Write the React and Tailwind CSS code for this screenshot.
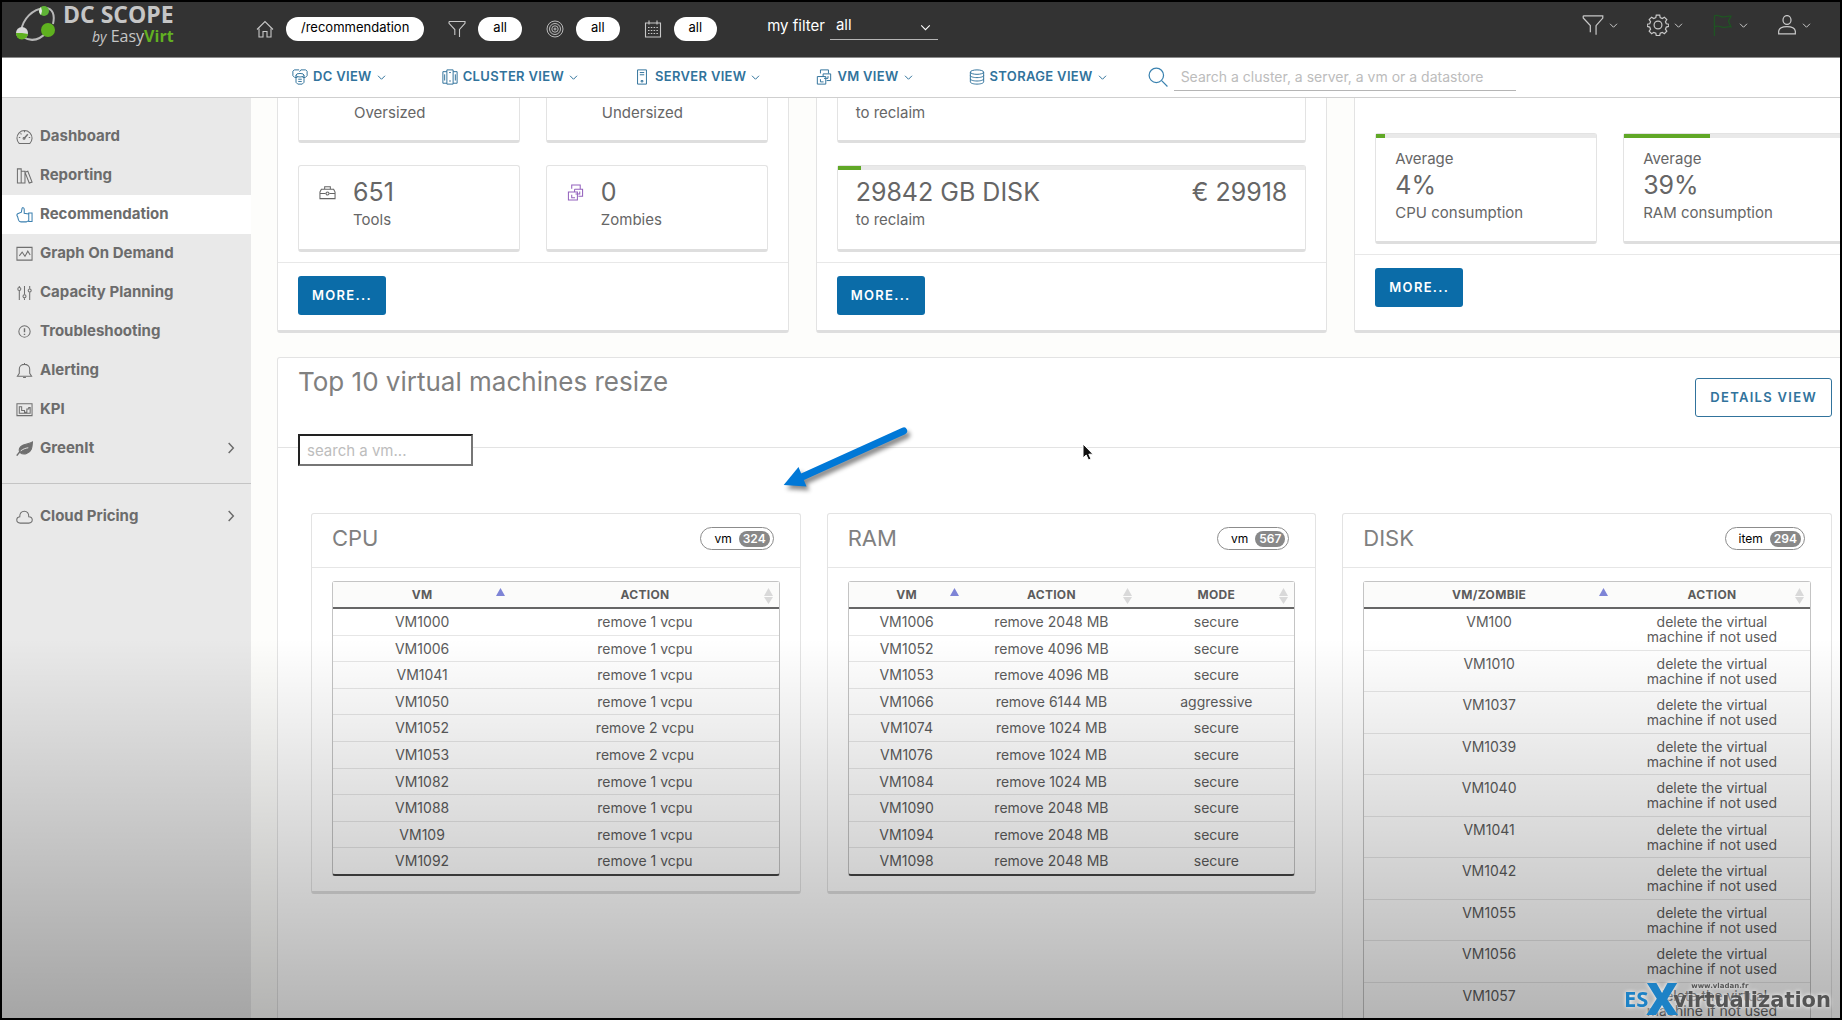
import { useState } from 'react';

const NAV_ITEMS = [
  { label: 'Dashboard', icon: 'gauge' },
  { label: 'Reporting', icon: 'books' },
  { label: 'Recommendation', icon: 'thumb' },
  { label: 'Graph On Demand', icon: 'graph' },
  { label: 'Capacity Planning', icon: 'sliders' },
  { label: 'Troubleshooting', icon: 'alert' },
  { label: 'Alerting', icon: 'bell' },
  { label: 'KPI', icon: 'kpi' },
  { label: 'GreenIt', icon: 'leaf', expandable: true },
];

const VIEWS = [
  { label: 'DC VIEW', icon: 'dc' },
  { label: 'CLUSTER VIEW', icon: 'cluster' },
  { label: 'SERVER VIEW', icon: 'server' },
  { label: 'VM VIEW', icon: 'vm' },
  { label: 'STORAGE VIEW', icon: 'storage' },
];

const CPU_ROWS = [
  ['VM1000', 'remove 1 vcpu'],
  ['VM1006', 'remove 1 vcpu'],
  ['VM1041', 'remove 1 vcpu'],
  ['VM1050', 'remove 1 vcpu'],
  ['VM1052', 'remove 2 vcpu'],
  ['VM1053', 'remove 2 vcpu'],
  ['VM1082', 'remove 1 vcpu'],
  ['VM1088', 'remove 1 vcpu'],
  ['VM109', 'remove 1 vcpu'],
  ['VM1092', 'remove 1 vcpu'],
];

const RAM_ROWS = [
  ['VM1006', 'remove 2048 MB', 'secure'],
  ['VM1052', 'remove 4096 MB', 'secure'],
  ['VM1053', 'remove 4096 MB', 'secure'],
  ['VM1066', 'remove 6144 MB', 'aggressive'],
  ['VM1074', 'remove 1024 MB', 'secure'],
  ['VM1076', 'remove 1024 MB', 'secure'],
  ['VM1084', 'remove 1024 MB', 'secure'],
  ['VM1090', 'remove 2048 MB', 'secure'],
  ['VM1094', 'remove 2048 MB', 'secure'],
  ['VM1098', 'remove 2048 MB', 'secure'],
];

const DISK_ROWS = [
  'VM100', 'VM1010', 'VM1037', 'VM1039', 'VM1040',
  'VM1041', 'VM1042', 'VM1055', 'VM1056', 'VM1057',
].map((vm) => [vm, 'delete the virtual machine if not used']);

// all icons live on an 18x18 grid
const ICONS = {
  home: (
    <>
      <path d="M1 9.5 9 1.5l8 8" />
      <path d="M3 8.5v8.5h4v-5.5h4V17h4V8.5" />
    </>
  ),
  filter: <path d="M1 1.5h16v1.8L11.5 9.5V17M6.8 15V9.5L1 3.3V1.5" />,
  target: (
    <>
      <circle cx="9" cy="9" r="8" />
      <circle cx="9" cy="9" r="5.5" />
      <circle cx="9" cy="9" r="3.2" />
      <circle cx="9" cy="9" r="1" />
    </>
  ),
  calendar: (
    <>
      <path d="M1.5 3h15v14h-15zM5 .5v4M13 .5v4" />
      <path d="M4 7.5h10M4 10.5h10M4 13.5h10" strokeDasharray="1.5 1.3" />
    </>
  ),
  gear: (
    <>
      <circle cx="9" cy="9" r="3.2" />
      <path d="M7.6 1h2.8l.4 2 1.7.7 1.7-1.1 2 2-1.1 1.7.7 1.7 2 .4v1.8l-2 .5-.7 1.7 1.1 1.7-2 2-1.7-1.1-1.7.7-.4 2H7.6l-.4-2-1.7-.7-1.7 1.1-2-2 1.1-1.7-.7-1.7-2-.5V8.400l2-.4.7-1.700-1.100-1.700 2-2 1.700 1.100 1.700-.7z" />
    </>
  ),
  flag: <path d="M2 18V1.5c3-1.5 5 1.5 8 .8 2-.4 3.5-.8 5.500-.5L13.500 6l2 4.500c-3-.6-4 .8-6.500.4C6.500 10.500 5 9 2 10.500" />,
  user: (
    <>
      <ellipse cx="9" cy="4.5" rx="3.6" ry="4" />
      <path d="M1.5 17v-2.5C2 11.5 6 10.5 9 10.5s7 1 7.5 4V17z" />
    </>
  ),
  search: <path d="M12.5 12.5 17.5 17.5M14 7.5a6.500 6.500 0 1 1-13 0 6.500 6.500 0 0 1 13 0z" />,
  gauge: (
    <>
      <path d="M3.5 16.5A8 8 0 1 1 14.5 16.5zM9 3v1.5M3 10h1.5M13.5 10H15M4.8 5.8l1 1" />
      <path d="M12.5 6.5 8.5 11" strokeWidth="1.6" />
      <circle cx="8.5" cy="11" r="1" />
    </>
  ),
  books: <path d="M1.5 2h4v15h-4zM5.5 4.5h4V17h-4M9.5 5.5l3-1L17 16l-3 1zM9.5 5.5v11.5" />,
  thumb: (
    <path d="M13.5 7.5h3.500v9h-3.500zM13.500 8.500 8.700 7.700V3.500C8.700 1.500 6.500 1 6.300 3L5.700 6.500 1.800 8.200C.4 9 1 10.500 1.600 11L2.700 15c.4 1.200 1.300 1.800 2.500 1.800h5.600l2.700-1.300" />
  ),
  graph: <path d="M1 2.5h16v13.500H1zM3.500 11.500l3-4 3 4.500 3-5.500 2.500 4" />,
  sliders: (
    <>
      <path d="M3.5 2v1.5M3.5 7v10M9 2v9M9 15v2M14.5 2v3M14.5 9v8" />
      <circle cx="3.5" cy="5.2" r="1.6" />
      <circle cx="9" cy="13" r="1.6" />
      <circle cx="14.5" cy="7" r="1.6" />
    </>
  ),
  alert: (
    <>
      <circle cx="9" cy="9" r="6" />
      <path d="M9 5.5v4.3M9 11.3v1.3" strokeWidth="1.5" />
    </>
  ),
  bell: <path d="M1.5 15h15l-2-3V7.5C14.5 4.5 12 2.5 9 2.5S3.5 4.5 3.5 7.5V12zM9 1v1.5M7.5 16.5h3" />,
  kpi: <path d="M1 3h16v12.5H1zM3.5 13V6h2.500v4h3v2h2.500V8.500h2V7H15v6z" />,
  leaf: (
    <>
      <path d="M17.5 2C13 5 8 3.5 4.8 7.2 3 9.3 3.3 11.8 4.3 13.3 8.5 16.5 14.5 14 16.3 9.5c1-2.5.8-5.5 1.2-7.5z" fill="currentColor" />
      <path d="M.8 16.5C3 13 6.5 10 12.5 8.8" strokeWidth="1.5" />
      <path d="M5 11.5C7.5 9.5 10 8.7 13 8.2" stroke="#e9e9e9" strokeWidth="1" />
    </>
  ),
  cloud: <path d="M4.5 16C2 16 .8 14.3.8 12.5S2.5 9.5 4 9.3C3.8 5.500 6 3.500 8.800 3.500s4.900 2 4.700 5.800c2 .2 3.700 1.400 3.700 3.200S16 16 13.500 16z" />,
  toolbox: (
    <>
      <path d="M1 8.5 2.5 5.5h13L17 8.5V15.5H1zM6 5.5V3h6v2.5M1 10h6M11 10h6" />
      <circle cx="9" cy="10" r="1.6" />
    </>
  ),
  dc: (
    <>
      <path d="M6 9.5H3L1 7.5V2.5L2.5 1H8M12 9.5h3L17 7.5V2.5L15.5 1H10l-1.5 2" />
      <ellipse cx="9" cy="7" rx="4.5" ry="2" />
      <path d="M4.5 7v8l2 2h5l2-2V7M7 11.5h4M7 14h4" />
    </>
  ),
  cluster: <path d="M5.5 1h7v16h-7zM5.5 3H1v13h4.5M12.5 3H17v13h-4.5M3 6v7M15 6v7M8 13.5h2M8 4h2" />,
  server: <path d="M4 1h10v16H4zM6.5 4h5M6.5 6.5h5M8 13h2v1.5H8z" />,
  vm: <path d="M5 5V1h9v4M8 5.500h8.500v7.500H12M8 5.500v3M1.500 8.500h9.500v8.500H1.500zM13.500 8v2.500H9M5 11.500v3h3.500" />,
  storage: (
    <>
      <ellipse cx="9" cy="3.5" rx="7.5" ry="2.5" />
      <path d="M1.5 3.5v11C1.5 16 5 17 9 17s7.5-1 7.5-2.500v-11M1.500 7.200C1.500 8.700 5 9.700 9 9.700s7.500-1 7.500-2.500M1.500 11C1.500 12.500 5 13.500 9 13.500s7.500-1 7.500-2.500" />
    </>
  ),
  down: <path d="M2 5.5 9 12.5 16 5.5" />,
  right: <path d="M5.5 1.5 12.5 9 5.5 16.5" />,
};

function Icon({ name, className, stroke = 1.1 }) {
  return (
    <svg
      viewBox="0 0 18 18"
      className={className}
      fill="none"
      stroke="currentColor"
      strokeWidth={stroke}
      aria-hidden="true"
    >
      {ICONS[name]}
    </svg>
  );
}

function Logo() {
  return (
    <a href="#home" className="flex w-[254px] shrink-0 items-start gap-[6px] pl-[13px]">
      <svg viewBox="0 0 42 40" className="h-10 w-[42px]" fill="none" aria-hidden="true">
        <path d="M6 29C8 17 17 7 30 6c8 0 10 7 8 16" stroke="#b9b9b9" strokeWidth="2" />
        <path d="M8 35c8 5 17 3 25-6" stroke="#b9b9b9" strokeWidth="2" />
        <circle cx="29" cy="9" r="5" fill="#5fb336" />
        <path d="M26 5a5 5 0 0 0 0 8l1-4z" fill="#e6e6e6" />
        <circle cx="33" cy="28" r="7" fill="#5fb11f" />
        <circle cx="7" cy="31" r="6" fill="#d8d8d8" />
        <path d="M1 31a6 6 0 0 0 12 1l-6-1z" fill="#5fb11f" />
      </svg>
      <span className="flex flex-col items-end font-['Open_Sans'] text-[#c6c6c6]">
        <span className="text-[23px] leading-6 font-bold">DC SCOPE</span>
        <span className="text-base leading-5">
          <i className="text-sm">by</i> Easy<b className="text-[#62b022]">Virt</b>
        </span>
      </span>
    </a>
  );
}

function Pill({ children }) {
  return (
    <span className="flex h-6 items-center rounded-full bg-white px-[15px] pb-[2px] text-[13px] text-black">
      {children}
    </span>
  );
}

function TopBar() {
  return (
    <header className="flex h-14 shrink-0 items-start border-b border-[#8c8c8c] bg-[#333] text-[#c8c8c8]">
      <Logo />
      <div className="flex items-center gap-3 pt-[15px]">
        <Icon name="home" className="size-[18px]" />
        <Pill>/recommendation</Pill>
        <Icon name="filter" className="ml-3 size-[18px]" />
        <Pill>all</Pill>
        <Icon name="target" className="ml-3 size-[18px]" stroke={0.9} />
        <Pill>all</Pill>
        <Icon name="calendar" className="ml-3 size-[18px]" />
        <Pill>all</Pill>
      </div>
      <div className="ml-[50px] flex items-center gap-[5px] pt-[10px] text-[15px] text-white">
        <label htmlFor="my-filter">my filter</label>
        <div className="relative">
          <select
            id="my-filter"
            className="h-7 w-[108px] appearance-none border-b border-[#b5b5b5] bg-transparent px-[6px] text-[15px] text-white outline-none"
          >
            <option>all</option>
          </select>
          <Icon name="down" className="pointer-events-none absolute top-[10px] right-[7px] size-[11px]" stroke={1.8} />
        </div>
      </div>
      <div className="ml-auto flex gap-[29px] pt-3 pr-[29px]">
        <button className="flex items-center gap-[5px]" aria-label="Filters">
          <Icon name="filter" className="size-[22px]" stroke={1} />
          <Icon name="down" className="size-[9px]" stroke={2} />
        </button>
        <button className="flex items-center gap-[5px]" aria-label="Settings">
          <Icon name="gear" className="size-[22px]" stroke={1} />
          <Icon name="down" className="size-[9px]" stroke={2} />
        </button>
        <button className="flex items-center gap-[5px]" aria-label="Status">
          <Icon name="flag" className="size-[22px] text-[#1f5423]" stroke={1.1} />
          <Icon name="down" className="size-[9px]" stroke={2} />
        </button>
        <button className="flex items-center gap-[5px]" aria-label="Account">
          <Icon name="user" className="size-5" stroke={1.1} />
          <Icon name="down" className="size-[9px]" stroke={2} />
        </button>
      </div>
    </header>
  );
}

function ViewBar() {
  return (
    <div className="flex h-10 shrink-0 items-center border-b border-[#cfcfcf] bg-white pb-px pl-[290px]">
      <nav className="flex gap-14">
        {VIEWS.map((view) => (
          <button
            key={view.label}
            className="flex items-center gap-[5px] text-[13px] font-semibold tracking-wide text-[#31739c]"
          >
            <Icon name={view.icon} className="size-4" />
            {view.label}
            <Icon name="down" className="size-[9px]" stroke={2} />
          </button>
        ))}
      </nav>
      <label htmlFor="global-search" className="ml-[41px] text-[#3a82b0]">
        <Icon name="search" className="size-5" />
      </label>
      <input
        id="global-search"
        type="text"
        placeholder="Search a cluster, a server, a vm or a datastore"
        className="ml-[6px] h-7 w-[342px] border-b border-[#b5b5b5] px-[7px] text-sm outline-none placeholder:text-[#bcbcbc]"
      />
    </div>
  );
}

function SideItem({ item, active }) {
  return (
    <a
      href="#nav"
      className={`flex h-[39px] items-center gap-[7px] pr-[14px] pb-px pl-[14px] text-[15px] font-bold text-[#6c6c6c] ${
        active ? 'bg-white' : ''
      }`}
    >
      <Icon name={item.icon} className={`size-[17px] ${active ? 'text-[#3c80b0]' : 'text-[#6f6f6f]'}`} />
      <span>{item.label}</span>
      {item.expandable && <Icon name="right" className="ml-auto size-3" stroke={2.2} />}
    </a>
  );
}

function Sidebar() {
  return (
    <aside className="w-[249px] shrink-0 bg-[#e9e9e9] pt-[19px]">
      <nav>
        {NAV_ITEMS.map((item) => (
          <SideItem key={item.label} item={item} active={item.label === 'Recommendation'} />
        ))}
        <div className="mt-[15px] border-t border-[#c4c4c4] pt-[13px]">
          <SideItem item={{ label: 'Cloud Pricing', icon: 'cloud', expandable: true }} />
        </div>
      </nav>
    </aside>
  );
}

// bordered box with the thick bottom edge that every card has
const BOX = 'rounded-[3px] border border-[#e3e3e3] border-b-[3px] border-b-[#dedede] bg-white';
const BOX_CUT = 'rounded-b-[3px] border border-t-0 border-[#e3e3e3] border-b-[3px] border-b-[#dedede] bg-white';

function Progress({ value }) {
  return (
    <div className="h-1 bg-[#e9e9e9]">
      <div className="h-1 bg-[#60a826]" style={{ width: `${value}%` }} />
    </div>
  );
}

function CountTile({ icon, iconClass, count, label }) {
  return (
    <div className={`${BOX} flex h-[87px] gap-[17px] pl-5`}>
      <Icon name={icon} className={`mt-[18px] size-[17px] ${iconClass}`} />
      <div>
        <p className="mt-3 text-[25px] leading-7">{count}</p>
        <p className="mt-1 text-[15px] leading-5">{label}</p>
      </div>
    </div>
  );
}

function UsageTile({ value, label }) {
  return (
    <div className={`${BOX} h-[111px]`}>
      <Progress value={value} />
      <div className="px-[19px] pt-[11px]">
        <p className="text-[15px] leading-5">Average</p>
        <p className="mt-[2px] text-[25px] leading-7">{value}%</p>
        <p className="mt-1 text-[15px] leading-5">{label}</p>
      </div>
    </div>
  );
}

function SummaryCard({ children }) {
  return (
    <section className={`${BOX_CUT} flex h-[235px] flex-col text-[#666]`}>
      <div className="px-5 pb-[10px]">{children}</div>
      <div className="flex-1 border-t border-[#e8e8e8] px-5 pt-[13px]">
        <button className="h-[39px] rounded-[3px] bg-[#0b6ca8] px-[14px] text-[13px] font-semibold tracking-widest text-white">
          MORE...
        </button>
      </div>
    </section>
  );
}

function Summary() {
  return (
    <div className="grid grid-cols-3 gap-[27px]">
      <SummaryCard>
        <div className="grid grid-cols-2 gap-x-[26px] gap-y-[22px]">
          <div className={`${BOX_CUT} h-[45px] pt-[5px] pl-[55px] text-[15px] leading-5`}>Oversized</div>
          <div className={`${BOX_CUT} h-[45px] pt-[5px] pl-[55px] text-[15px] leading-5`}>Undersized</div>
          <CountTile icon="toolbox" iconClass="text-[#666]" count="651" label="Tools" />
          <CountTile icon="vm" iconClass="text-[#9462bd]" count="0" label="Zombies" />
        </div>
      </SummaryCard>
      <SummaryCard>
        <div className="grid gap-y-[22px]">
          <div className={`${BOX_CUT} h-[45px] pt-[5px] pl-[18px] text-[15px] leading-5`}>to reclaim</div>
          <div className={`${BOX} h-[87px]`}>
            <Progress value={5} />
            <div className="flex justify-between px-[18px] pt-2">
              <div>
                <p className="text-[25px] leading-7">29842 GB DISK</p>
                <p className="mt-1 text-[15px] leading-5">to reclaim</p>
              </div>
              <p className="text-[25px] leading-7">€ 29918</p>
            </div>
          </div>
        </div>
      </SummaryCard>
      <SummaryCard>
        <div className="grid grid-cols-2 gap-x-[26px] pt-[35px]">
          <UsageTile value={4} label="CPU consumption" />
          <UsageTile value={39} label="RAM consumption" />
        </div>
      </SummaryCard>
    </div>
  );
}

function SortMark({ sorted }) {
  return (
    <svg viewBox="0 0 9 16" className="absolute top-[6px] right-[6px] h-4 w-[9px]" aria-hidden="true">
      <path d="M0 8 4.5 0 9 8z" fill={sorted ? '#7e84d6' : '#d9d9d9'} />
      {!sorted && <path d="M0 9h9l-4.5 7z" fill="#d9d9d9" />}
    </svg>
  );
}

function ResizeTable({ columns, rows, className }) {
  return (
    <table
      className={`w-full table-fixed border-separate border-spacing-0 rounded-[3px] border border-[#c4c4c4] border-b-2 border-b-[#444] bg-white text-center text-[#5c5c5c] ${className}`}
    >
      <thead>
        <tr>
          {columns.map((col, i) => (
            <th
              key={col.label}
              className={`relative h-[27px] border-b-2 border-[#666] bg-[#fbfbfa] text-xs font-bold tracking-wide text-[#5c5c5c] ${col.width}`}
            >
              {col.label}
              <SortMark sorted={i === 0} />
            </th>
          ))}
        </tr>
      </thead>
      <tbody className="text-sm leading-[15px]">
        {rows.map((row, r) => (
          <tr key={row[0]}>
            {row.map((cell, c) => (
              <td
                key={c}
                className={`px-4 pt-[5px] pb-[5px] align-top ${r < rows.length - 1 ? 'border-b border-[#e6e6e6]' : ''}`}
              >
                {cell}
              </td>
            ))}
          </tr>
        ))}
      </tbody>
    </table>
  );
}

function ResizeCard({ title, unit, count, children }) {
  return (
    <section className={BOX}>
      <div className="flex h-[54px] items-center justify-between border-b border-[#e6e6e6] pr-[26px] pb-1 pl-5">
        <h3 className="text-[22px] text-[#808080]">{title}</h3>
        <span className="flex h-[23px] items-center gap-[7px] rounded-full border border-[#8c8c8c] bg-white pr-[3px] pl-[13px] text-xs text-black">
          {unit}
          <span className="flex h-4 items-center rounded-full bg-[#888] px-[4px] text-xs font-semibold text-white">
            {count}
          </span>
        </span>
      </div>
      <div className="px-5 pt-[13px] pb-[15px]">{children}</div>
    </section>
  );
}

function TopResize() {
  const [query, setQuery] = useState('');
  const match = (rows) => rows.filter((row) => row[0].toLowerCase().includes(query.toLowerCase()));

  return (
    <section className={`${BOX} mt-6`}>
      <div className="flex h-[90px] items-start justify-between border-b border-[#e3e3e3] pr-[33px] pl-5">
        <h2 className="pt-2 text-[26px] leading-8 text-[#808080]">Top 10 virtual machines resize</h2>
        <button className="mt-5 h-[39px] rounded-[3px] border border-[#31739c] px-[14px] text-[13px] font-semibold tracking-widest text-[#31739c]">
          DETAILS VIEW
        </button>
      </div>
      <div className="px-5">
        <input
          type="text"
          aria-label="search a vm"
          value={query}
          onChange={(e) => setQuery(e.target.value)}
          placeholder="search a vm..."
          className="relative -mt-[14px] block h-8 w-[175px] border-2 border-t-[#222] border-r-[#767676] border-b-[#767676] border-l-[#222] bg-white px-[7px] text-[15px] outline-none placeholder:text-[#bdbdbd]"
        />
      </div>
      <div className="grid grid-cols-3 items-start gap-[26px] px-[33px] pt-[47px] pb-8">
        <ResizeCard title="CPU" unit="vm" count={324}>
          <ResizeTable
            className="h-[295px]"
            columns={[{ label: 'VM', width: 'w-[40%]' }, { label: 'ACTION', width: 'w-[60%]' }]}
            rows={match(CPU_ROWS)}
          />
        </ResizeCard>
        <ResizeCard title="RAM" unit="vm" count={567}>
          <ResizeTable
            className="h-[295px]"
            columns={[
              { label: 'VM', width: 'w-[26%]' },
              { label: 'ACTION', width: 'w-[39%]' },
              { label: 'MODE', width: 'w-[35%]' },
            ]}
            rows={match(RAM_ROWS)}
          />
        </ResizeCard>
        <ResizeCard title="DISK" unit="item" count={294}>
          <ResizeTable
            className="h-[444px]"
            columns={[{ label: 'VM/ZOMBIE', width: 'w-[56%]' }, { label: 'ACTION', width: 'w-[44%]' }]}
            rows={match(DISK_ROWS)}
          />
        </ResizeCard>
      </div>
    </section>
  );
}

// arrow annotation pointing at the resize tables
function Arrow() {
  return (
    <svg viewBox="0 0 130 66" className="pointer-events-none absolute top-[424px] left-[779px] h-[66px] w-[130px] drop-shadow-[3px_4px_2px_rgba(0,0,0,0.45)]" aria-hidden="true">
      <path d="M122.7 5 21 51" stroke="#0078d7" strokeWidth="7" strokeLinecap="round" />
      <path d="M2.700 59 17.500 41 25.500 60.500z" fill="#0078d7" />
    </svg>
  );
}

function Pointer() {
  return (
    <svg viewBox="0 0 12 18" className="pointer-events-none absolute top-[441px] left-[1080px] h-[18px] w-3" aria-hidden="true">
      <path d="M1 1v14l3.200-3 2.300 5 2.500-1-2.200-4.800H11z" fill="#111" stroke="#fff" strokeWidth="1" />
    </svg>
  );
}

function Watermark() {
  return (
    <div className="pointer-events-none absolute right-[9px] bottom-[2px] flex items-center font-['DejaVu_Sans'] font-bold drop-shadow-[0_0_2px_#fff]">
      <span className="font-['Open_Sans'] text-[22px] leading-8 text-[#1d82c6]">ES</span>
      <span className="-mx-[2px] font-['Open_Sans'] text-[44px] leading-9 font-extrabold text-[#1d82c6]">X</span>
      <span className="-ml-[3px] flex flex-col pb-1 text-[#555]">
        <span className="pl-[18px] text-[7px] leading-[8px]">www.vladan.fr</span>
        <span className="text-[21px] leading-5">virtualization</span>
      </span>
    </div>
  );
}

export default function App() {
  return (
    <div className="relative flex h-screen flex-col overflow-hidden border-2 border-black bg-[#fdfdfb] font-[Inter,sans-serif]">
      <TopBar />
      <ViewBar />
      <div className="flex min-h-0 flex-1">
        <Sidebar />
        <main className="min-w-0 flex-1 overflow-hidden">
          {/* content is a bit wider than the viewport and runs off on the right */}
          <div className="-mr-[26px] pl-[26px]">
            <Summary />
            <TopResize />
          </div>
        </main>
      </div>
      <div className="pointer-events-none absolute inset-x-0 bottom-0 h-[380px] bg-linear-to-b from-black/0 to-black/29" />
      <Arrow />
      <Pointer />
      <Watermark />
    </div>
  );
}
